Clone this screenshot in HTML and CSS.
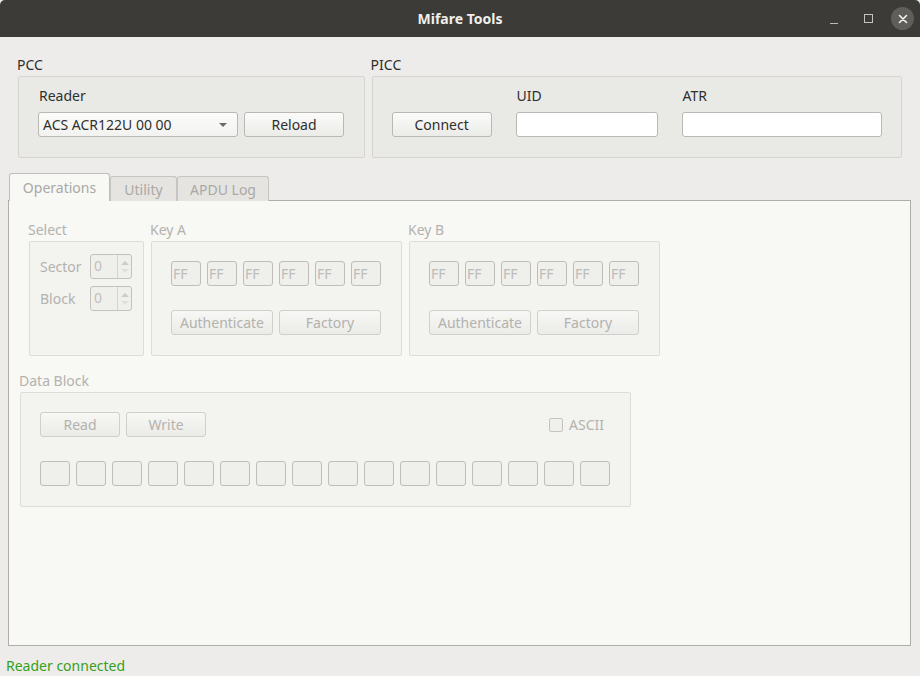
FILE: index.html
```html
<!DOCTYPE html>
<html>
<head>
<meta charset="utf-8">
<link rel="stylesheet" href="styles.css">
</head>
<body>
<div class="window">
  <header class="titlebar">
    <div class="title">Mifare Tools</div>
    <div class="wm">
      <span class="wm-min"></span>
      <span class="wm-max"></span>
      <span class="wm-close">
        <svg width="10" height="10" viewBox="0 0 10 10"><path d="M1.5 1.5 L8.5 8.5 M8.5 1.5 L1.5 8.5" stroke="#f2f2f0" stroke-width="1.6" stroke-linecap="round"/></svg>
      </span>
    </div>
  </header>

  <main class="content">
    <div class="top-row">
      <section class="group pcc">
        <div class="group-title">PCC</div>
        <div class="box box-top">
          <div class="reader-grid">
            <div class="lbl">Reader</div>
            <div></div>
            <div class="combo"><span>ACS ACR122U 00 00</span><span class="caret"></span></div>
            <button class="btn">Reload</button>
          </div>
        </div>
      </section>
      <section class="group picc">
        <div class="group-title">PICC</div>
        <div class="box box-top">
          <div class="picc-grid">
            <div></div>
            <div class="lbl">UID</div>
            <div class="lbl">ATR</div>
            <button class="btn">Connect</button>
            <div class="input"></div>
            <div class="input"></div>
          </div>
        </div>
      </section>
    </div>

    <div class="tabs">
      <div class="tabbar">
        <div class="tab active">Operations</div>
        <div class="tab t-util">Utility</div>
        <div class="tab t-apdu">APDU Log</div>
      </div>
      <div class="pane">
        <div class="ops-row">
          <section class="dgroup sel">
            <div class="dtitle">Select</div>
            <div class="dbox sel-box">
              <div class="spin-row"><span class="dlbl">Sector</span><div class="spin"><span class="spin-val">0</span><span class="spin-btns"><i class="up"></i><i class="dn"></i></span></div></div>
              <div class="spin-row"><span class="dlbl">Block</span><div class="spin"><span class="spin-val">0</span><span class="spin-btns"><i class="up"></i><i class="dn"></i></span></div></div>
            </div>
          </section>
          <section class="dgroup key">
            <div class="dtitle">Key A</div>
            <div class="dbox key-box">
              <div class="cells">
                <div class="cell">FF</div><div class="cell">FF</div><div class="cell">FF</div><div class="cell">FF</div><div class="cell">FF</div><div class="cell">FF</div>
              </div>
              <div class="key-btns">
                <button class="dbtn wide">Authenticate</button>
                <button class="dbtn wide">Factory</button>
              </div>
            </div>
          </section>
          <section class="dgroup key">
            <div class="dtitle">Key B</div>
            <div class="dbox key-box">
              <div class="cells">
                <div class="cell">FF</div><div class="cell">FF</div><div class="cell">FF</div><div class="cell">FF</div><div class="cell">FF</div><div class="cell">FF</div>
              </div>
              <div class="key-btns">
                <button class="dbtn wide">Authenticate</button>
                <button class="dbtn wide">Factory</button>
              </div>
            </div>
          </section>
        </div>

        <section class="dgroup data">
          <div class="dtitle">Data Block</div>
          <div class="dbox data-box">
            <div class="data-top">
              <div class="rw">
                <button class="dbtn rwbtn">Read</button>
                <button class="dbtn rwbtn">Write</button>
              </div>
              <label class="check"><span class="checkbox"></span>ASCII</label>
            </div>
            <div class="cells">
              <div class="cell"></div><div class="cell"></div><div class="cell"></div><div class="cell"></div>
              <div class="cell"></div><div class="cell"></div><div class="cell"></div><div class="cell"></div>
              <div class="cell"></div><div class="cell"></div><div class="cell"></div><div class="cell"></div>
              <div class="cell"></div><div class="cell"></div><div class="cell"></div><div class="cell"></div>
            </div>
          </div>
        </section>
      </div>
    </div>
  </main>

  <footer class="status">Reader connected</footer>
</div>
</body>
</html>
```

FILE: styles.css
```css
* { box-sizing: border-box; }
html, body { margin: 0; padding: 0; }
body {
  width: 920px;
  height: 676px;
  overflow: hidden;
  background: #3c3b37;
  font-family: "Noto Sans", "DejaVu Sans", sans-serif;
  font-size: 14px;
  color: #2f2f2d;
}
.window {
  width: 920px;
  height: 676px;
  background: #edecea;
  display: flex;
  flex-direction: column;
}
.titlebar {
  height: 37px;
  background: #3c3b37;
  border-radius: 5px 5px 0 0;
  position: relative;
  display: flex;
  align-items: center;
  justify-content: center;
  flex: none;
}
.title {
  color: #f0efec;
  font-weight: bold;
  font-size: 14px;
}
.wm {
  position: absolute;
  right: 6px;
  top: 7px;
  display: flex;
  align-items: center;
}
.wm-min {
  width: 8px;
  height: 1px;
  background: #b9b8b3;
  margin-top: 9px;
  margin-right: 26px;
}
.wm-max {
  width: 9px;
  height: 9px;
  border: 1px solid #c4c3bf;
  margin-right: 18px;
}
.wm-close {
  width: 23px;
  height: 23px;
  border-radius: 50%;
  background: #5f5e5a;
  display: flex;
  align-items: center;
  justify-content: center;
}

.content {
  flex: 1;
  padding: 19px 9px 0 8px;
  display: flex;
  flex-direction: column;
}
.top-row {
  display: flex;
  gap: 7px;
  padding: 0 9px 0 10px;
}
.group-title {
  height: 18px;
  line-height: 18px;
  margin-bottom: 2px;
}
.pcc .group-title, .picc .group-title { margin-left: -1px; }
.pcc { width: 347px; }
.picc { width: 531px; }
.box {
  border: 1px solid #d5d4d0;
  background: #e9e9e6;
  border-radius: 2px;
}
.box-top {
  height: 82px;
  padding: 10px 0 0 19px;
}
.lbl {
  height: 18px;
  line-height: 18px;
  padding-left: 1px;
  margin-bottom: 7px;
}
.reader-grid {
  display: grid;
  grid-template-columns: 200px 100px;
  column-gap: 6px;
}
.picc-grid {
  display: grid;
  grid-template-columns: 100px 142px 200px;
  column-gap: 24px;
}
.btn {
  height: 25px;
  border: 1px solid #b9b8b4;
  border-radius: 3px;
  background: linear-gradient(#fbfbfa, #ebebe8);
  font: inherit;
  color: #2f2f2d;
  padding: 0;
}
.combo {
  height: 25px;
  border: 1px solid #b9b8b4;
  border-radius: 3px;
  background: linear-gradient(#fcfcfb, #f2f2f0);
  display: flex;
  align-items: center;
  justify-content: space-between;
  padding: 0 10px 0 4px;
}
.caret {
  width: 0; height: 0;
  border-left: 4px solid transparent;
  border-right: 4px solid transparent;
  border-top: 4px solid #6b6a66;
}
.input {
  height: 25px;
  border: 1px solid #b9b8b4;
  border-radius: 3px;
  background: #fff;
}

/* tabs */
.tabs {
  margin-top: 16px;
  display: flex;
  flex-direction: column;
  flex: 1;
}
.tabbar {
  display: flex;
  height: 27px;
  align-items: flex-end;
  padding-left: 1px;
  position: relative;
  z-index: 1;
  margin-bottom: -1px;
}
.tab {
  height: 25px;
  border: 1px solid #c6c5c1;
  border-bottom: none;
  background: #e5e4e1;
  color: #aaa9a5;
  line-height: 25px;
  text-align: center;
  border-radius: 3px 3px 0 0;
}
.tab.active {
  height: 28px;
  background: #f8f8f5;
  line-height: 27px;
  width: 101px;
  border-color: #c0bfbb;
}
.t-util { width: 67px; }
.t-apdu { width: 92px; }
.pane {
  height: 446px;
  flex: none;
  border: 1px solid #aeada9;
  background: #f8f8f5;
  padding: 20px 0 0 10px;
  color: #b3b2ae;
}
.ops-row {
  display: flex;
  gap: 6px;
  padding-left: 9px;
}
.dtitle {
  height: 18px;
  line-height: 18px;
  margin-bottom: 2px;
}
.dbox {
  margin-left: 1px;
  border: 1px solid #dddcd8;
  background: #f3f3f0;
  border-radius: 2px;
  height: 115px;
}
.sel-box { width: 115px; padding: 12px 0 0 10px; }
.spin-row {
  display: flex;
  align-items: center;
  height: 25px;
  margin-bottom: 7px;
}
.dlbl { width: 50px; }
.spin {
  width: 42px;
  height: 25px;
  border: 1px solid #c3c2be;
  border-radius: 3px;
  background: #efefec;
  display: flex;
}
.spin-val {
  flex: 1;
  padding-left: 3px;
  line-height: 22px;
  color: #c0bfbb;
}
.spin-btns {
  width: 14px;
  border-left: 1px solid #d4d3cf;
  display: flex;
  flex-direction: column;
  align-items: center;
  justify-content: center;
  gap: 4px;
}
.spin-btns i {
  width: 0; height: 0;
  border-left: 4px solid transparent;
  border-right: 4px solid transparent;
}
.spin-btns .up { border-bottom: 4px solid #cdccc8; }
.spin-btns .dn { border-top: 4px solid #e0dfdb; }

.key-box { width: 251px; padding: 19px 0 0 19px; }
.cells { display: flex; gap: 6px; }
.cell {
  width: 30px;
  height: 25px;
  border: 1px solid #bebdb9;
  border-radius: 3px;
  background: #efefec;
  line-height: 23px;
  padding-left: 1px;
  color: #bdbcb8;
  font-size: 14px;
}
.key-btns {
  display: flex;
  gap: 6px;
  margin-top: 24px;
}
.dbtn {
  height: 25px;
  border: 1px solid #d0cfcb;
  border-radius: 3px;
  background: linear-gradient(#f7f7f5, #ebebe8);
  font: inherit;
  color: #b3b2ae;
  padding: 0;
}
.wide { width: 102px; }

.data { margin-top: 16px; }
.data-box {
  width: 611px;
  margin-left: 1px;
  padding: 19px 20px 0 19px;
}
.data-top {
  display: flex;
  justify-content: space-between;
  align-items: center;
  margin-bottom: 24px;
}
.rw { display: flex; gap: 6px; }
.rwbtn { width: 80px; }
.check {
  display: flex;
  align-items: center;
  gap: 6px;
  padding-right: 6px;
}
.checkbox {
  width: 14px;
  height: 14px;
  border: 1px solid #c4c3bf;
  border-radius: 2px;
  background: #efefec;
}

.status {
  height: 20px;
  line-height: 20px;
  padding-left: 6px;
  color: #36a020;
  flex: none;
}
```
